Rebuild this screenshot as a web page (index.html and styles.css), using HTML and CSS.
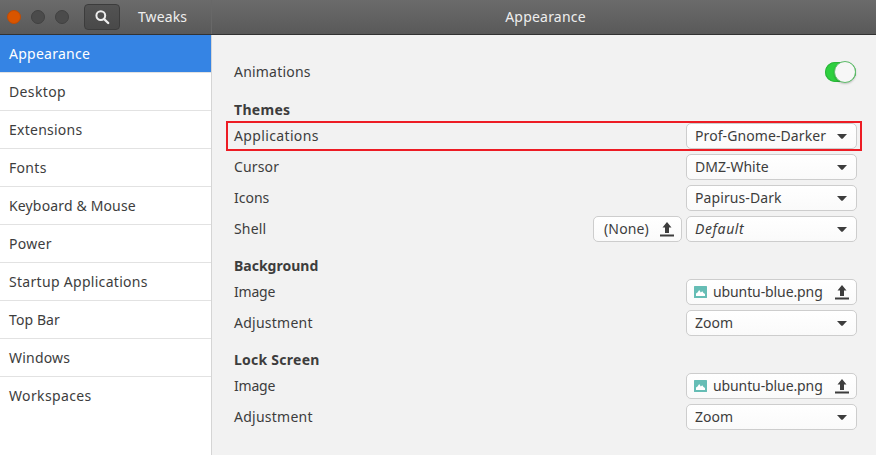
FILE: index.html
```html
<!DOCTYPE html>
<html lang="en">
<head>
<meta charset="utf-8">
<title>Tweaks</title>
<link rel="stylesheet" href="styles.css">
</head>
<body>
<svg class="defs" width="0" height="0">
  <symbol id="upload" viewBox="0 0 14 15"><path d="M7 0 11.5 5.5H9V11H5V5.5H2.5ZM0 12.5H14V14.5H0Z" fill="currentColor"/></symbol>
  <symbol id="arrow" viewBox="0 0 10 5"><path d="M0 0H10L5.6 4.7H4.4Z" fill="currentColor"/></symbol>
  <symbol id="picture" viewBox="0 0 13 12"><rect width="13" height="12" rx=".5" fill="#66bdb5"/><path d="M2 10V7.5L3.5 6.5 5.2 4 6.8 6.5 8.3 5.3 9.5 7 11 8V10Z" fill="#fff"/></symbol>
</svg>
<header class="titlebar">
  <div class="titlebar-left">
    <span class="dot close"></span><span class="dot"></span><span class="dot"></span>
    <button class="search"><svg width="15" height="15" viewBox="0 0 15 15" fill="none" stroke="#eee"><circle cx="5.8" cy="5.6" r="4.4" stroke-width="2"/><path d="M9 9 13.2 13" stroke-width="2.4" stroke-linecap="round"/></svg></button>
    <span class="app-name">Tweaks</span>
  </div>
  <div class="titlebar-main"><span class="t-head">Appearance</span></div>
</header>
<div class="body">
  <nav class="sidebar">
    <a class="active t-appearance">Appearance</a>
    <a class="t-desktop">Desktop</a>
    <a class="t-extensions">Extensions</a>
    <a class="t-fonts">Fonts</a>
    <a class="t-keyboard">Keyboard &amp; Mouse</a>
    <a class="t-power">Power</a>
    <a class="t-startup">Startup Applications</a>
    <a class="t-topbar">Top Bar</a>
    <a class="t-windows">Windows</a>
    <a class="t-workspaces">Workspaces</a>
  </nav>
  <main class="panel">
    <div class="row animations"><span class="t-animations">Animations</span><span class="switch"><i></i></span></div>
    <section>
      <h2 class="t-themes">Themes</h2>
      <div class="row highlight"><span class="t-applications">Applications</span><button class="control"><span class="t-prof">Prof-Gnome-Darker</span><svg class="arrow"><use href="#arrow"/></svg></button></div>
      <div class="row"><span class="t-cursor">Cursor</span><button class="control"><span>DMZ-White</span><svg class="arrow"><use href="#arrow"/></svg></button></div>
      <div class="row"><span>Icons</span><button class="control"><span class="t-papirus">Papirus-Dark</span><svg class="arrow"><use href="#arrow"/></svg></button></div>
      <div class="row"><span class="t-shell">Shell</span><button class="control none"><span class="t-none">(None)</span><svg class="upload"><use href="#upload"/></svg></button><button class="control"><em class="t-default">Default</em><svg class="arrow"><use href="#arrow"/></svg></button></div>
    </section>
    <section>
      <h2>Background</h2>
      <div class="row"><span class="t-image">Image</span><button class="control file"><svg class="picture"><use href="#picture"/></svg><span class="t-file">ubuntu-blue.png</span><svg class="upload"><use href="#upload"/></svg></button></div>
      <div class="row"><span class="t-adjustment">Adjustment</span><button class="control"><span>Zoom</span><svg class="arrow"><use href="#arrow"/></svg></button></div>
    </section>
    <section>
      <h2 class="t-lock">Lock Screen</h2>
      <div class="row"><span class="t-image">Image</span><button class="control file"><svg class="picture"><use href="#picture"/></svg><span class="t-file">ubuntu-blue.png</span><svg class="upload"><use href="#upload"/></svg></button></div>
      <div class="row"><span class="t-adjustment">Adjustment</span><button class="control"><span>Zoom</span><svg class="arrow"><use href="#arrow"/></svg></button></div>
    </section>
  </main>
</div>
</body>
</html>
```
FILE: styles.css
```css
* { box-sizing: border-box; }
body { margin: 0; height: 455px; overflow: hidden; display: flex; flex-direction: column; background: #f2f2f2; color: #3d3d3d; font: 14px/20px "Noto Sans", sans-serif; white-space: nowrap; }
button { font: inherit; color: inherit; margin: 0; }
.defs { position: absolute; }
.titlebar { display: flex; height: 35px; flex: none; background: linear-gradient(#6b6b6b, #595959); border-bottom: 1px solid #323232; color: #eee; }
.titlebar-left { width: 212px; display: flex; align-items: center; padding-left: 7px; border-right: 1px solid #686868; }
.dot { width: 14px; height: 14px; border-radius: 50%; margin-right: 10px; background: #4b4b4b; border: 1px solid #414141; }
.dot.close { background: #d95500; border-color: #bd4b06; }
.search { width: 36px; height: 26px; margin-left: 5px; padding: 0 0 0 1px; display: flex; align-items: center; justify-content: center; border: 1px solid #3c3c3c; border-radius: 4px; background: linear-gradient(#535353, #494949); }
.app-name { margin-left: 18px; letter-spacing: .1px; }
.titlebar-main { flex: 1; display: flex; align-items: center; justify-content: center; padding-left: 3px; }
.body { flex: 1; display: flex; }
.sidebar { width: 212px; background: #fff; border-right: 1px solid #d5d5d5; }
.sidebar a { display: flex; align-items: center; height: 38px; padding-left: 9px; border-bottom: 1px solid #e2e2e2; }
.sidebar a:last-child { border: 0; }
.sidebar .active { background: #3584e4; background-clip: padding-box; color: #fff; }
.panel { flex: 1; padding: 24px 19px 0 22px; }
.row { display: flex; align-items: center; height: 26px; gap: 4px; margin-bottom: 5px; }
.row > :first-child { margin-right: auto; }
.animations { margin-bottom: 12px; }
section { margin-bottom: 11px; }
h2 { margin: 0; font-size: 14px; line-height: 26px; height: 26px; font-weight: 700; }
section .row:last-child { margin-bottom: 0; }
.row.highlight { height: 30px; margin: -2px -5px 3px -8px; padding: 0 5px 0 8px; outline: 2px solid #ed1c24; outline-offset: -2px; }
.control { width: 171px; height: 26px; display: flex; align-items: center; padding: 0 9px 0 8px; border: 1px solid #cdcdcd; border-radius: 5px; background: linear-gradient(#fff, #fafafa); }
.control svg:last-child { margin-left: auto; }
.control.none { width: 89px; padding: 0 7px 0 10px; }
.control.file { padding: 0 7px; }
.arrow { width: 10px; height: 5px; }
.upload { width: 14px; height: 15px; }
.picture { width: 13px; height: 12px; margin-right: 6px; }
.switch { width: 31px; height: 20px; margin-right: 1px; padding-left: 9px; border-radius: 10px; background: #2ed03f; box-shadow: inset 0 0 0 1px #2cb53b; }
.switch i { display: block; width: 22px; height: 22px; margin-top: -1px; border-radius: 50%; border: 1px solid #5fbd6b; background: #f7f7f7; box-shadow: 0 1px 2px #0003; }

/* Label tracking */
.t-keyboard, .t-shell, .t-cursor, .t-none { letter-spacing: .15px; }
.t-prof, .t-papirus, .t-topbar { letter-spacing: .09px; }
.t-head, .t-animations, .t-windows { letter-spacing: .2px; }
.t-appearance, .t-extensions, .t-adjustment, .t-lock { letter-spacing: .25px; }
.t-fonts, .t-power, .t-startup, .t-themes { letter-spacing: .3px; }
.t-desktop, .t-workspaces, .t-applications { letter-spacing: .36px; }
.t-default { letter-spacing: .6px; }
.t-image { letter-spacing: -.2px; }
.t-file { letter-spacing: -.1px; }
```
